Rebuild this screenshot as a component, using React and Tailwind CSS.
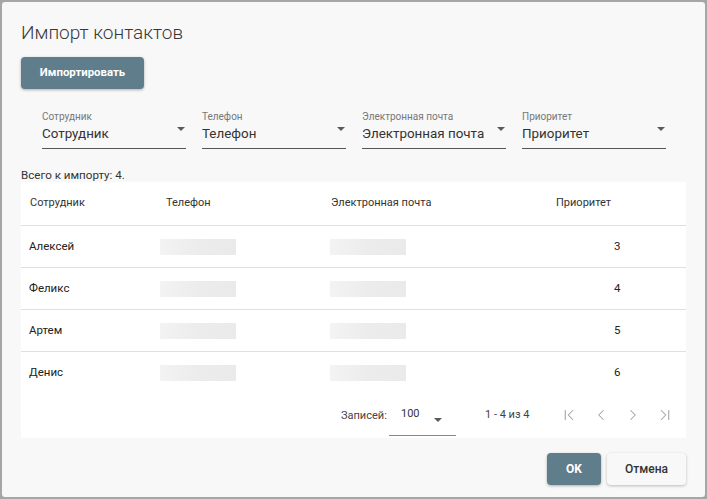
import React from "react";
import { ChevronFirst, ChevronLeft, ChevronRight, ChevronLast } from "lucide-react";

const Tri = ({ className = "" }) => (
  <svg width="8" height="4" viewBox="0 0 8 4" className={className}>
    <path d="M0 0 L8 0 L4 4 Z" fill="#5a5a5a" />
  </svg>
);

const Field = ({ label }) => (
  <div className="flex flex-col w-[144px] border-b border-[#555]">
    <div className="text-[10px] leading-[12px] text-[#777]">{label}</div>
    <div className="flex items-center justify-between h-[16px] mt-[3px] mb-[6px]">
      <span className="text-[13.4px] leading-[16px] text-[#333]">{label}</span>
      <Tri className="-mt-[11px] mr-[1px]" />
    </div>
  </div>
);

const Blur = () => (
  <div className="w-[76px] h-[16px] bg-gradient-to-r from-[#f3f3f3] via-[#ececec] to-[#eaeaea]" />
);

const rows = [
  ["Алексей", 3],
  ["Феликс", 4],
  ["Артем", 5],
  ["Денис", 6],
];

export default function App() {
  return (
    <div
      className="w-[707px] h-[499px] bg-[#a6a6a6] p-[2px]"
      style={{ fontFamily: "Roboto, 'Liberation Sans', sans-serif" }}
    >
      <div className="w-full h-full bg-[#f8f8f8] rounded-[3px] px-[19px] pt-[19px] flex flex-col">
        <div className="text-[19px] leading-[24px] text-[#383838]" style={{ fontWeight: 350 }}>
          Импорт контактов
        </div>
        <div className="mt-[12px]">
          <button className="h-[32px] w-[123px] rounded-[4px] bg-[#607d8b] text-white text-[11.4px] font-bold shadow-[0_1px_3px_rgba(0,0,0,0.3)]">
            Импортировать
          </button>
        </div>
        <div className="flex gap-[16px] pl-[21px] mt-[22px]">
          <Field label="Сотрудник" />
          <Field label="Телефон" />
          <Field label="Электронная почта" />
          <Field label="Приоритет" />
        </div>
        <div className="mt-[19px] text-[11.6px] leading-[14px] text-[#333]">Всего к импорту: 4.</div>
        <div className="bg-white w-[665px] flex flex-col">
          <div className="flex items-center h-[44px] border-b border-[#e0e0e0] text-[11px] text-[#333]">
            <div className="w-[145px] pl-[9px]">Сотрудник</div>
            <div className="w-[165px]">Телефон</div>
            <div className="w-[225px]">Электронная почта</div>
            <div>Приоритет</div>
          </div>
          {rows.map(([name, p], i) => (
            <div
              key={name}
              className={`flex items-center h-[42px] text-[11.5px] text-[#222] ${i < 3 ? "border-b border-[#e0e0e0]" : ""}`}
            >
              <div className="w-[139px] pl-[8px]">{name}</div>
              <div className="w-[170px]">
                <Blur />
              </div>
              <div className="w-[284px]">
                <Blur />
              </div>
              <div>{p}</div>
            </div>
          ))}
          <div className="flex items-center h-[44px] text-[11px] text-[#444] pl-[320px]">
            <div className="w-[48px]">Записей:</div>
            <div className="w-[67px] h-[40px] border-b border-[#888] flex items-center justify-between pl-[12px] pr-[14px]">
              <span className="text-[#333] -mt-[2px]">100</span>
              <Tri className="mt-[8px]" />
            </div>
            <div className="ml-[29px] -mt-[2px]">1 - 4 из 4</div>
            <div className="flex gap-[8px] ml-[28px] text-[#a0a0a0] -mt-[2px]">
              <ChevronFirst size={18} strokeWidth={1.4} className="w-[24px]" />
              <ChevronLeft size={18} strokeWidth={1.4} className="w-[24px]" />
              <ChevronRight size={18} strokeWidth={1.4} className="w-[24px]" />
              <ChevronLast size={18} strokeWidth={1.4} className="w-[24px]" />
            </div>
          </div>
        </div>
        <div className="flex justify-end gap-[6px] mt-[15px]">
          <button className="h-[32px] w-[54px] rounded-[4px] bg-[#607d8b] text-white text-[12px] font-bold shadow-[0_1px_3px_rgba(0,0,0,0.3)]">
            OK
          </button>
          <button className="h-[32px] w-[79px] rounded-[4px] bg-[#f8f8f8] text-[#333] text-[12px] font-medium shadow-[0_1px_3px_rgba(0,0,0,0.25)]">
            Отмена
          </button>
        </div>
      </div>
    </div>
  );
}
